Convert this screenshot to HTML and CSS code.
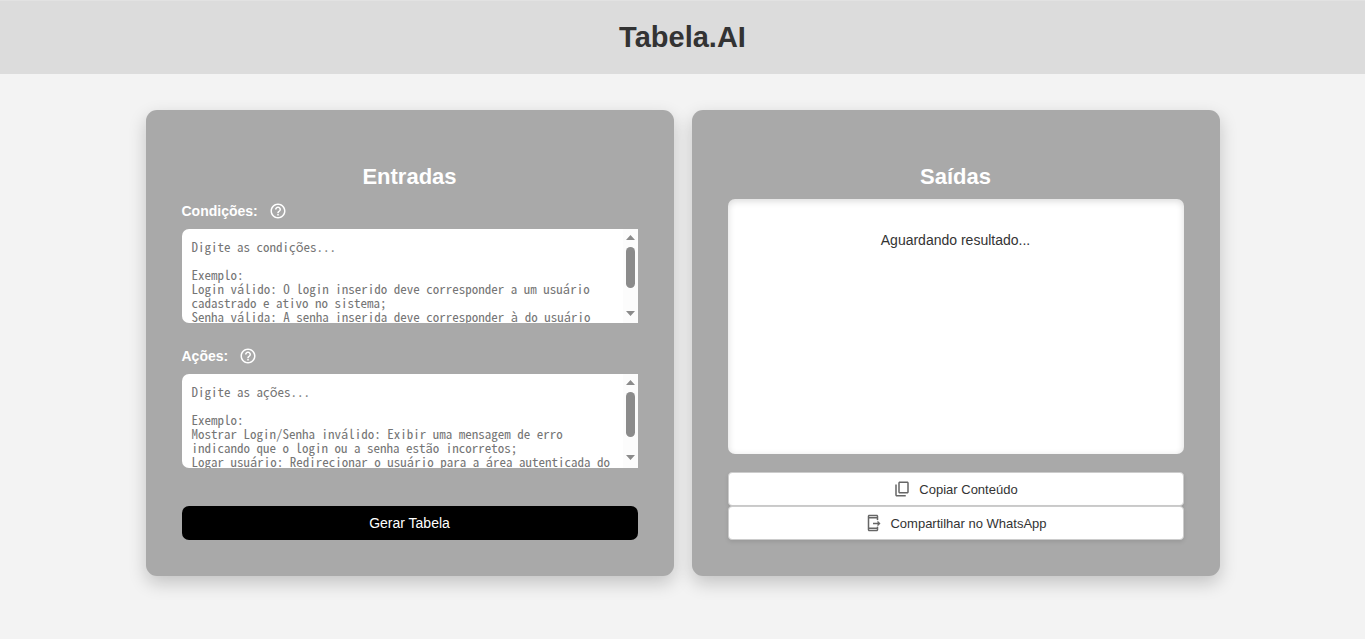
FILE: index.html
```html
<!DOCTYPE html>
<html lang="pt-BR">
<head>
<meta charset="utf-8">
<meta name="viewport" content="width=device-width, initial-scale=1">
<title>Tabela.AI</title>
<link rel="stylesheet" href="styles.css">
</head>
<body>
<header class="header">
  <h1 class="title">Tabela.AI</h1>
</header>
<main class="container">
  <section class="panel">
    <h2 class="panel-title">Entradas</h2>
    <div class="field">
      <div class="label-row">
        <label for="condicoes">Condições:</label>
        <svg class="help" viewBox="0 0 24 24" aria-hidden="true"><path d="M11 18h2v-2h-2v2zm1-16C6.480 2 2 6.480 2 12s4.480 10 10 10 10-4.480 10-10S17.520 2 12 2zm0 18c-4.410 0-8-3.590-8-8s3.590-8 8-8 8 3.590 8 8-3.590 8-8 8zm0-14c-2.210 0-4 1.790-4 4h2c0-1.100.9-2 2-2s2 .9 2 2c0 2-3 1.750-3 5h2c0-2.250 3-2.500 3-5 0-2.210-1.790-4-4-4z"/></svg>
      </div>
      <div class="input-box">
        <textarea class="input" id="condicoes" placeholder="Digite as condições...

Exemplo:
Login válido: O login inserido deve corresponder a um usuário cadastrado e ativo no sistema;
Senha válida: A senha inserida deve corresponder à do usuário cadastrado."></textarea>
        <svg class="scrollbar" viewBox="0 0 15 94" aria-hidden="true"><path class="scroll-track" d="M0 0h15v94H0z"/><path d="M3 11l4.500-5 4.500 5zM3 82h9l-4.500 5z"/><rect x="3" y="18" width="9" height="41" rx="4.500"/></svg>
      </div>
    </div>
    <div class="field">
      <div class="label-row">
        <label for="acoes">Ações:</label>
        <svg class="help" viewBox="0 0 24 24" aria-hidden="true"><path d="M11 18h2v-2h-2v2zm1-16C6.480 2 2 6.480 2 12s4.480 10 10 10 10-4.480 10-10S17.520 2 12 2zm0 18c-4.410 0-8-3.590-8-8s3.590-8 8-8 8 3.590 8 8-3.590 8-8 8zm0-14c-2.210 0-4 1.790-4 4h2c0-1.100.9-2 2-2s2 .9 2 2c0 2-3 1.750-3 5h2c0-2.250 3-2.500 3-5 0-2.210-1.790-4-4-4z"/></svg>
      </div>
      <div class="input-box">
        <textarea class="input" id="acoes" placeholder="Digite as ações...

Exemplo:
Mostrar Login/Senha inválido: Exibir uma mensagem de erro indicando que o login ou a senha estão incorretos;
Logar usuário: Redirecionar o usuário para a área autenticada do sistema."></textarea>
        <svg class="scrollbar" viewBox="0 0 15 94" aria-hidden="true"><path class="scroll-track" d="M0 0h15v94H0z"/><path d="M3 11l4.500-5 4.500 5zM3 81h9l-4.500 5z"/><rect x="3" y="18" width="9" height="45" rx="4.500"/></svg>
      </div>
    </div>
    <button class="generate" type="button">Gerar Tabela</button>
  </section>
  <section class="panel">
    <h2 class="panel-title">Saídas</h2>
    <div class="output"><p class="output-text">Aguardando resultado...</p></div>
    <div class="actions">
      <button class="action" type="button">
        <svg class="action-icon" viewBox="0 0 24 24" aria-hidden="true"><path d="M19 2H9C7.900 2 7 2.900 7 4v12c0 1.100.9 2 2 2h10c1.100 0 2-.9 2-2V4c0-1.100-.9-2-2-2zm0 14H9V4h10v12z"/><path d="M3 6h2v14h12v2H5c-1.100 0-2-.9-2-2z"/></svg>
        Copiar Conteúdo
      </button>
      <button class="action" type="button">
        <svg class="action-icon" viewBox="0 0 24 24" aria-hidden="true"><path d="M17 17v1H7V6h10v2h2V3c0-1.100-.9-2-2-2H7c-1.100 0-2 .9-2 2v18c0 1.100.9 2 2 2h10c1.100 0 2-.9 2-2v-4h-2zM7 3h10v1H7V3zm10 18H7v-1h10v1z"/><path d="M18 8.500l4 4-4 4v-3h-6v-2h6z"/></svg>
        Compartilhar no WhatsApp
      </button>
    </div>
  </section>
</main>
</body>
</html>
```
FILE: styles.css
```css
* {
  box-sizing: border-box;
}

body {
  margin: 0;
  background: #f3f3f3;
  color: #333;
  font-family: "Liberation Sans", Arial, sans-serif;
  font-size: 14px;
}

.header {
  padding: 19px;
  border-top: 1px solid #e2e2e2;
  background: #dcdcdc;
  text-align: center;
}

.title {
  margin: 0;
  font-size: 29px;
  line-height: 35px;
}

.container {
  display: grid;
  grid-template-columns: 1fr 1fr;
  gap: 18px;
  max-width: 1110px;
  margin: 0 auto;
  padding: 36px 18px;
}

.panel {
  display: flex;
  flex-direction: column;
  padding: 52px 36px 36px;
  border-radius: 11px;
  background: #a9a9a9;
  box-shadow: 0 7px 18px rgba(0, 0, 0, 0.2);
}

.panel-title {
  margin: 0 0 7px;
  color: #fff;
  font-size: 22px;
  line-height: 30px;
  text-align: center;
}

.field {
  margin-bottom: 21px;
}

.label-row {
  display: flex;
  align-items: center;
  gap: 11px;
  height: 24px;
  margin-bottom: 6px;
  color: #fff;
  font-weight: bold;
  line-height: 18px;
}

.help {
  width: 18px;
  height: 18px;
  fill: #fff;
}

.input-box {
  position: relative;
}

.input {
  display: block;
  width: 100%;
  height: 94px;
  padding: 11px 20px 11px 10px;
  border: 0;
  border-radius: 7px 0 0 7px;
  background: #fff;
  color: #333;
  font-family: "Noto Sans Mono CJK SC", "Liberation Mono", monospace;
  font-size: 13px;
  line-height: 14px;
  resize: none;
  scrollbar-width: none;
}

.input::placeholder {
  color: #757575;
}

.scrollbar {
  position: absolute;
  top: 0;
  right: 0;
  width: 15px;
  height: 94px;
  fill: #8b8b8b;
  pointer-events: none;
}

.scroll-track {
  fill: #fcfcfc;
}

.generate {
  height: 34px;
  margin-top: auto;
  border: 0;
  border-radius: 7px;
  background: #000;
  color: #fff;
  font: 14px "Liberation Sans", Arial, sans-serif;
}

.output {
  min-height: 255px;
  padding: 32px 18px;
  border-radius: 7px;
  background: #fff;
  box-shadow: inset 0 2px 7px rgba(0, 0, 0, 0.15);
  text-align: center;
}

.output-text {
  margin: 0;
  line-height: 18px;
}

.actions {
  display: flex;
  flex-direction: column;
  margin-top: 18px;
}

.action {
  display: flex;
  align-items: center;
  justify-content: center;
  gap: 8px;
  height: 34px;
  padding: 0 6px;
  border: 1px solid #ccc;
  border-radius: 4px;
  background: #fff;
  box-shadow: 0 2px 4px rgba(0, 0, 0, 0.1);
  color: #333;
  font: 13px "Liberation Sans", Arial, sans-serif;
}

.action-icon {
  width: 18px;
  height: 18px;
  fill: #666;
}
```
